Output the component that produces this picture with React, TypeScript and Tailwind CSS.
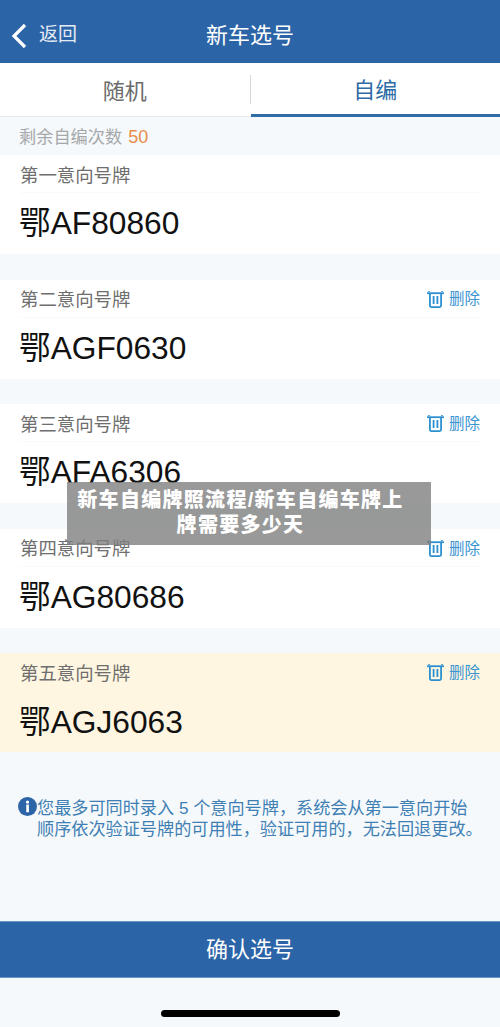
const FONT = "font-['Liberation_Sans','Noto_Sans_CJK_SC',sans-serif]";

const PLATES = [
    { label: '第一意向号牌', plate: '鄂AF80860', canDelete: false },
    { label: '第二意向号牌', plate: '鄂AGF0630', canDelete: true },
    { label: '第三意向号牌', plate: '鄂AFA6306', canDelete: true },
    { label: '第四意向号牌', plate: '鄂AG80686', canDelete: true },
    { label: '第五意向号牌', plate: '鄂AGJ6063', canDelete: true, active: true },
];

function TrashIcon() {
    return (
        <svg width="17" height="17" viewBox="0 0 17 17" fill="none" stroke="#2b8fd0" strokeWidth="1.8">
            <path d="M0 2.2h17" />
            <path d="M1 .2h2M14 .2h2" strokeWidth="1.2" />
            <path d="M2.9 2.2v12.4a1.5 1.5 0 0 0 1.5 1.5h8.2a1.5 1.5 0 0 0 1.5-1.5V2.2" />
            <path d="M6.6 5v8M10.4 5v8" />
        </svg>
    );
}

function PlateCard({ label, plate, canDelete, active }: { label: string; plate: string; canDelete: boolean; active?: boolean }) {
    return (
        <div className={`h-[99px] px-5 ${active ? 'bg-[#fef6e0]' : 'bg-white'}`}>
            <div className={`flex h-[38px] items-center justify-between border-b ${active ? 'border-[#fef6e0]' : 'border-[#f9fafb]'}`}>
                <span className="mt-[4px] text-[18.4px] text-[#6e6e6e]">{label}</span>
                {canDelete && (
                    <span className="mt-[2px] flex items-center gap-[5px] text-[15.5px] text-[#3a94d2]">
                        <TrashIcon />
                        删除
                    </span>
                )}
            </div>
            <div className="-ml-px flex h-[61px] items-center pt-[1px] text-[31.7px] leading-none text-[#111111]">{plate}</div>
        </div>
    );
}

export default function App() {
    return (
        <div className={`relative flex h-[1027px] w-[500px] flex-col overflow-hidden bg-[#f5f9fb] ${FONT}`}>
            {/* Header */}
            <div className="relative flex h-[63px] items-center justify-center bg-[#2c64a8] pt-[8px] text-white">
                <div className="absolute left-[11px] flex items-center gap-[12px]">
                    <svg width="16" height="26" viewBox="0 0 16 26" fill="none" stroke="white" strokeWidth="3.2">
                        <path d="M14 2 3 13l11 11" />
                    </svg>
                    <span className="text-[19px] text-[#e4ebf4]">返回</span>
                </div>
                <span className="text-[22px]">新车选号</span>
            </div>

            {/* Tabs */}
            <div className="flex h-[54px] border-b border-[#e6e8e9] bg-white">
                <div className="flex flex-1 items-center justify-center pt-[3px] text-[22px] text-[#6b6b6b]">随机</div>
                <div className="my-[12px] w-[1px] bg-[#d5d7d8]" />
                <div className="-mb-px flex flex-1 items-center justify-center border-b-[3px] border-[#2f6ba5] pt-[3px] text-[22px] text-[#2f6ba5]">自编</div>
            </div>

            {/* Remaining count */}
            <div className="flex h-[38px] items-center gap-[6px] px-[19px] pt-[3px] text-[17.2px] text-[#a5a8aa]">
                <span>剩余自编次数</span>
                <span className="text-[18px] text-[#e88d47]">50</span>
            </div>

            <div className="flex flex-col gap-[25.6px]">
                {PLATES.map((item) => (
                    <PlateCard key={item.label} {...item} />
                ))}
            </div>

            {/* Notice */}
            <div className="mt-[46px] flex items-start pl-[18px] text-[17.15px] leading-[21px] text-[#3f7fb4]">
                <svg className="mt-[-1px] shrink-0" width="19" height="19" viewBox="0 0 20 20">
                    <circle cx="10" cy="10" r="10" fill="#2c64a8" />
                    <rect x="8.7" y="8" width="2.8" height="8" fill="white" />
                    <circle cx="10" cy="5.3" r="1.7" fill="white" />
                </svg>
                <p className="shrink-0 whitespace-nowrap">
                    您最多可同时录入 5 个意向号牌，系统会从第一意向开始
                    <br />
                    顺序依次验证号牌的可用性，验证可用的，无法回退更改。
                </p>
            </div>

            {/* Confirm */}
            <div className="absolute top-[921px] left-0 flex h-[57px] w-full items-center justify-center border-y border-[#6f97c4] bg-[#2c64a8] text-[22px] text-white">
                确认选号
            </div>

            {/* Home indicator */}
            <div className="absolute top-[1010px] left-[161px] h-[7px] w-[179px] rounded-full bg-black" />

            {/* Title overlay */}
            <div className="absolute top-[482px] left-[67px] flex h-[63px] w-[364px] items-center justify-center bg-[#808080]/80 pr-[17px] pb-[2px] text-center text-[20px] leading-[25px] font-black tracking-[1.3px] text-white">
                <p>
                    新车自编牌照流程/新车自编车牌上
                    <br />
                    牌需要多少天
                </p>
            </div>
        </div>
    );
}
